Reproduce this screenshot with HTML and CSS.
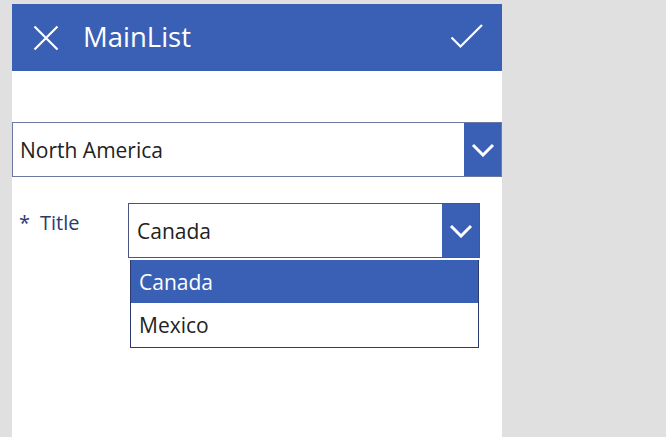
FILE: index.html
```html
<!DOCTYPE html>
<html>
<head>
<meta charset="utf-8">
<link rel="stylesheet" href="styles.css">
</head>
<body>
<div class="panel">
  <header class="header">
    <svg class="icon-x" width="26" height="26" viewBox="0 0 26 26"><path d="M1.5 1.5 L24.5 24.5 M24.5 1.5 L1.5 24.5" stroke="#fff" stroke-width="2.2" fill="none"/></svg>
    <span class="title">MainList</span>
    <svg class="icon-check" width="34" height="26" viewBox="0 0 34 26"><path d="M1.5 13.5 L10.5 22.5 L32 1" stroke="#fff" stroke-width="2.2" fill="none"/></svg>
  </header>
  <div class="dropdown region">
    <span class="value">North America</span>
    <span class="chev"><svg width="24" height="14" viewBox="0 0 24 14"><path d="M2 2 L12 12 L22 2" stroke="#fff" stroke-width="3" fill="none"/></svg></span>
  </div>
  <div class="field">
    <div class="label"><span class="star">*</span>Title</div>
    <div class="combo">
      <div class="dropdown country">
        <span class="value">Canada</span>
        <span class="chev"><svg width="24" height="14" viewBox="0 0 24 14"><path d="M2 2 L12 12 L22 2" stroke="#fff" stroke-width="3" fill="none"/></svg></span>
      </div>
      <ul class="menu">
        <li class="item selected">Canada</li>
        <li class="item">Mexico</li>
      </ul>
    </div>
  </div>
</div>
</body>
</html>
```
FILE: styles.css
```css
html, body {
  margin: 0;
  padding: 0;
}
body {
  background: #e0e0e0;
  font-family: "Open Sans", "Noto Sans", sans-serif;
  width: 666px;
  height: 437px;
  overflow: hidden;
}
.panel {
  margin: 4px 0 0 12px;
  width: 490px;
  height: 433px;
  background: #fff;
  display: flex;
  flex-direction: column;
}
.header {
  height: 67px;
  background: #3a60b5;
  display: flex;
  align-items: center;
  color: #fff;
  flex-shrink: 0;
}
.icon-x {
  margin-left: 21px;
  margin-top: 1px;
}
.title {
  margin-left: 24px;
  font-size: 27.5px;
  line-height: 30px;
  margin-top: -2px;
}
.icon-check {
  margin-left: auto;
  margin-right: 18px;
  margin-top: -1px;
}
.dropdown {
  box-sizing: border-box;
  height: 55px;
  border: 1px solid #6c77a3;
  display: flex;
  align-items: stretch;
  background: #fff;
}
.region {
  margin-top: 51px;
}
.value {
  flex: 1;
  display: flex;
  align-items: center;
  padding-left: 7px;
  font-size: 21px;
  color: #222;
}
.chev {
  width: 37px;
  background: #3a60b5;
  display: flex;
  align-items: center;
  justify-content: center;
}
.field {
  margin-top: 26px;
  display: flex;
}
.label {
  width: 116px;
  padding-left: 7px;
  box-sizing: border-box;
  font-size: 20px;
  color: #2c3a6e;
  line-height: 26px;
  padding-top: 7px;
}
.star {
  margin-right: 10px;
}
.combo {
  position: relative;
  width: 352px;
}
.country {
  border-color: #4a5583;
}
.country .value {
  padding-left: 8px;
}
.menu {
  position: absolute;
  left: 2px;
  top: 57px;
  width: 349px;
  box-sizing: border-box;
  margin: 0;
  padding: 0;
  list-style: none;
  border: 1px solid #2c3a70;
  border-top: none;
  background: #fff;
}
.item {
  height: 43px;
  display: flex;
  align-items: center;
  padding-left: 8px;
  font-size: 21px;
  color: #222;
}
.item.selected {
  background: #3a60b5;
  color: #fff;
}
.item + .item {
  height: 44px;
}
```
